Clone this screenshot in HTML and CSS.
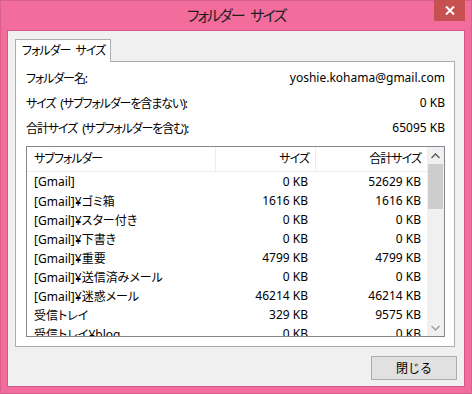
FILE: index.html
```html
<!DOCTYPE html>
<html lang="ja">
<head>
  <meta charset="UTF-8" />
  <title>フォルダー サイズ</title>
  <link rel="stylesheet" href="styles.css">
</head>
<body>
  <div class="window">
    <div class="titlebar">
      <span class="title">フォルダー サイズ</span>
      <button class="close">
        <svg width="10" height="9" viewBox="0 0 10 9"><path d="M1 0.5 L9 8.5 M9 0.5 L1 8.5" stroke="#fff" stroke-width="2"/></svg>
      </button>
    </div>

    <div class="client">
      <div class="tabs">
        <div class="tab">フォルダー サイズ</div>
      </div>
      <div class="panel">
        <div class="info">
          <span class="kana">フォルダー名:</span>
          <span>yoshie.kohama@gmail.com</span>
        </div>
        <div class="info">
          <span class="kana">サイズ (サブフォルダーを含まない):</span>
          <span>0 KB</span>
        </div>
        <div class="info">
          <span class="kana">合計サイズ (サブフォルダーを含む):</span>
          <span>65095 KB</span>
        </div>

        <div class="list">
          <div class="table">
            <div class="row head">
              <div class="c-name">サブフォルダー</div>
              <div class="c-size">サイズ</div>
              <div class="c-total">合計サイズ</div>
            </div>
            <div class="row"><div class="c-name">[Gmail]</div><div class="c-size">0 KB</div><div class="c-total">52629 KB</div></div>
            <div class="row"><div class="c-name">[Gmail]¥ゴミ箱</div><div class="c-size">1616 KB</div><div class="c-total">1616 KB</div></div>
            <div class="row"><div class="c-name">[Gmail]¥スター付き</div><div class="c-size">0 KB</div><div class="c-total">0 KB</div></div>
            <div class="row"><div class="c-name">[Gmail]¥下書き</div><div class="c-size">0 KB</div><div class="c-total">0 KB</div></div>
            <div class="row"><div class="c-name">[Gmail]¥重要</div><div class="c-size">4799 KB</div><div class="c-total">4799 KB</div></div>
            <div class="row"><div class="c-name">[Gmail]¥送信済みメール</div><div class="c-size">0 KB</div><div class="c-total">0 KB</div></div>
            <div class="row"><div class="c-name">[Gmail]¥迷惑メール</div><div class="c-size">46214 KB</div><div class="c-total">46214 KB</div></div>
            <div class="row"><div class="c-name">受信トレイ</div><div class="c-size">329 KB</div><div class="c-total">9575 KB</div></div>
            <div class="row"><div class="c-name">受信トレイ¥blog</div><div class="c-size">0 KB</div><div class="c-total">0 KB</div></div>
          </div>
          <div class="scrollbar">
            <div class="arrow">
              <svg width="9" height="6" viewBox="0 0 9 6"><path d="M0.5 5 L4.5 1 L8.5 5" fill="none" stroke="#606060" stroke-width="1.5"/></svg>
            </div>
            <div class="track"><div class="thumb"></div></div>
            <div class="arrow">
              <svg width="9" height="6" viewBox="0 0 9 6"><path d="M0.5 1 L4.5 5 L8.5 1" fill="none" stroke="#a0a0a0" stroke-width="1.5"/></svg>
            </div>
          </div>
        </div>
      </div>

      <div class="buttons">
        <button class="btn">閉じる</button>
      </div>
    </div>
  </div>
</body>
</html>
```

FILE: styles.css
```css
body {
  margin: 0;
  padding: 0;
  font-family: "Noto Sans", "Noto Sans CJK JP", sans-serif;
  font-size: 12px;
  color: #000;
  font-feature-settings: "palt";
}

.window {
  width: 472px;
  height: 394px;
  box-sizing: border-box;
  background-color: #f26c9c;
  border: 1px solid #d9608d;
  display: flex;
  flex-direction: column;
}

.titlebar {
  height: 29px;
  position: relative;
  display: flex;
  justify-content: center;
  align-items: center;
}

.title {
  font-size: 15px;
  color: #1e1e1e;
  margin-top: -2px;
  letter-spacing: -2px;
  word-spacing: 5px;
}

.close {
  position: absolute;
  top: -1px;
  right: 6px;
  width: 31px;
  height: 21px;
  border: none;
  padding: 0;
  background-color: #c75050;
  display: flex;
  justify-content: center;
  align-items: center;
}

.client {
  flex: 1;
  margin: 0 6px 6px 6px;
  border: 1px solid #d4598a;
  background-color: #f0f0f0;
  display: flex;
  flex-direction: column;
}

.tabs {
  display: flex;
  padding: 8px 0 0 7px;
}

.tab {
  width: 88px;
  height: 22px;
  line-height: 22px;
  padding-left: 6px;
  border: 1px solid #acacac;
  border-bottom: none;
  background: #fff;
  margin-bottom: -1px;
  position: relative;
  z-index: 1;
  white-space: nowrap;
  letter-spacing: -1px;
  word-spacing: 3px;
}

.panel {
  margin: 0 9px 0 7px;
  height: 281px;
  border: 1px solid #acacac;
  background: #fff;
  padding: 3px 9px 0 10px;
}

.info {
  height: 25px;
  display: flex;
  justify-content: space-between;
  align-items: center;
}

.kana {
  letter-spacing: -1.1px;
  word-spacing: 3px;
}

.list {
  margin-top: 6px;
  height: 189px;
  border: 1px solid #828790;
  display: flex;
  overflow: hidden;
}

.table {
  flex: 1;
}

.row {
  display: flex;
  height: 19px;
  align-items: center;
  white-space: nowrap;
}

.row.head {
  height: 24px;
  border-bottom: 1px solid #e5edf5;
  letter-spacing: -1px;
}

.row.head div {
  height: 24px;
  line-height: 24px;
}

.row.head .c-name,
.row.head .c-size {
  border-right: 1px solid #e5edf5;
}

.c-name {
  width: 181px;
  padding-left: 7px;
}

.c-size {
  width: 93px;
  padding-right: 6px;
  text-align: right;
}

.c-total {
  flex: 1;
  padding-right: 6px;
  text-align: right;
}

.scrollbar {
  width: 17px;
  background: #f0f0f0;
  display: flex;
  flex-direction: column;
}

.arrow {
  height: 17px;
  display: flex;
  justify-content: center;
  align-items: center;
}

.track {
  flex: 1;
}

.thumb {
  margin: 0 1px;
  height: 45px;
  background: #cdcdcd;
}

.buttons {
  display: flex;
  justify-content: flex-end;
  padding: 9px 7px 0 0;
}

.btn {
  width: 86px;
  height: 24px;
  border: 1px solid #adadad;
  background: #e1e1e1;
  font-family: inherit;
  font-size: 12px;
  color: #000;
  padding: 0;
}
```
